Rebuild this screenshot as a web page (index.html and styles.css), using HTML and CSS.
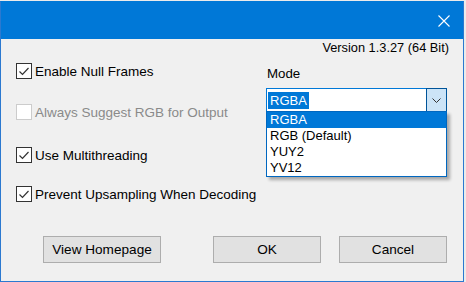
FILE: index.html
```html
<!DOCTYPE html>
<html>
<head>
<meta charset="utf-8">
<link rel="stylesheet" href="styles.css">
</head>
<body>
<div class="window">
  <div class="titlebar">
    <svg class="close" width="12" height="12" viewBox="0 0 12 12"><path d="M0.5 0.5 L11.5 11.5 M11.5 0.5 L0.5 11.5" stroke="#fff" stroke-width="1.1" fill="none"/></svg>
  </div>
  <div class="content">
    <div class="version">Version 1.3.27 (64 Bit)</div>
    <div class="main">
      <div class="options">
        <label class="opt opt1"><span class="box"><svg width="14" height="14" viewBox="0 0 14 14"><path d="M2.5 7.5 L5.5 10.5 L11.5 4" stroke="#333" stroke-width="1.2" fill="none"/></svg></span>Enable Null Frames</label>
        <label class="opt opt2 disabled"><span class="box"></span>Always Suggest RGB for Output</label>
        <label class="opt opt3"><span class="box"><svg width="14" height="14" viewBox="0 0 14 14"><path d="M2.5 7.5 L5.5 10.5 L11.5 4" stroke="#333" stroke-width="1.2" fill="none"/></svg></span>Use Multithreading</label>
        <label class="opt opt4"><span class="box"><svg width="14" height="14" viewBox="0 0 14 14"><path d="M2.5 7.5 L5.5 10.5 L11.5 4" stroke="#333" stroke-width="1.2" fill="none"/></svg></span>Prevent Upsampling When Decoding</label>
      </div>
      <div class="mode">
        <div class="mode-label">Mode</div>
        <div class="combo">
          <div class="combo-value"><span class="sel">RGBA</span></div>
          <div class="combo-btn"><svg width="9" height="5" viewBox="0 0 9 5"><path d="M0.5 0.5 L4.5 4.5 L8.5 0.5" stroke="#333" stroke-width="1" fill="none"/></svg></div>
          <ul class="list">
            <li class="active">RGBA</li>
            <li>RGB (Default)</li>
            <li>YUY2</li>
            <li>YV12</li>
          </ul>
        </div>
      </div>
    </div>
    <div class="buttons">
      <div class="btn btn-home">View Homepage</div>
      <div class="btn btn-ok">OK</div>
      <div class="btn btn-cancel">Cancel</div>
    </div>
  </div>
</div>
</body>
</html>
```

FILE: styles.css
```css
html {
  background: #ebebeb;
}
body {
  margin: 0;
  font-family: "Liberation Sans", Arial, sans-serif;
  font-size: 13px;
  line-height: 15px;
  color: #000;
}
.window {
  margin-top: 1px;
  width: 464px;
  height: 281px;
  box-sizing: border-box;
  border: 1px solid #2b79d0;
  border-top-color: #0078d7;
  background: #f0f0f0;
  display: flex;
  flex-direction: column;
}
.titlebar {
  height: 37px;
  background: #0078d7;
  display: flex;
  justify-content: flex-end;
  align-items: center;
  padding-right: 13px;
}
.close {
  display: block;
}
.content {
  flex: 1;
  display: flex;
  flex-direction: column;
  padding: 1px 14px 0 15px;
}
.version {
  text-align: right;
  height: 15px;
  font-size: 12.8px;
}
.main {
  display: flex;
}
.options {
  width: 250px;
  display: flex;
  flex-direction: column;
}
.opt {
  display: flex;
  align-items: center;
  height: 16px;
  white-space: nowrap;
  font-size: 13.5px;
}
.opt1 { margin-top: 8px; }
.opt2 { margin-top: 25px; }
.opt3 { margin-top: 27px; }
.opt4 { margin-top: 23px; }
.box {
  width: 16px;
  height: 16px;
  box-sizing: border-box;
  border: 1px solid #333;
  background: #fff;
  margin-right: 3px;
  display: flex;
  align-items: center;
  justify-content: center;
  flex: none;
}
.disabled {
  color: #8a8a8a;
}
.disabled .box {
  border-color: #cccccc;
}
.mode {
  display: flex;
  flex-direction: column;
}
.mode-label {
  margin-top: 11px;
  margin-left: 1px;
  font-size: 13.3px;
}
.combo {
  position: relative;
  margin-top: 7px;
  width: 181px;
  height: 24px;
  box-sizing: border-box;
  border: 1px solid #0078d7;
  background: #fff;
  display: flex;
}
.combo-value {
  flex: 1;
  display: flex;
  align-items: center;
  padding-left: 1px;
}
.sel {
  background: #0078d7;
  color: #fff;
  padding: 0 2px 0 2px;
  line-height: 17px;
}
.combo-btn {
  width: 21px;
  margin: -1px -1px -1px 0;
  box-sizing: border-box;
  border: 1px solid #005499;
  background: #cce4f7;
  display: flex;
  align-items: center;
  justify-content: center;
}
.list {
  position: absolute;
  left: -1px;
  top: 100%;
  width: 181px;
  box-sizing: border-box;
  margin: 0;
  padding: 0;
  list-style: none;
  border: 1px solid #0067c0;
  background: #fff;
  box-shadow: 3px 3px 3px rgba(0, 0, 0, 0.3);
}
.list li {
  height: 16px;
  line-height: 16px;
  padding-left: 3px;
}
.list li.active {
  background: #0078d7;
  color: #fff;
}
.buttons {
  display: flex;
  margin-top: 34px;
  padding-left: 27px;
}
.btn {
  height: 27px;
  box-sizing: border-box;
  border: 1px solid #adadad;
  background: #e1e1e1;
  display: flex;
  align-items: center;
  justify-content: center;
  font-size: 13.6px;
}
.btn-home { width: 118px; }
.btn-ok { width: 108px; margin-left: 52px; }
.btn-cancel { width: 108px; margin-left: 18px; }
```
